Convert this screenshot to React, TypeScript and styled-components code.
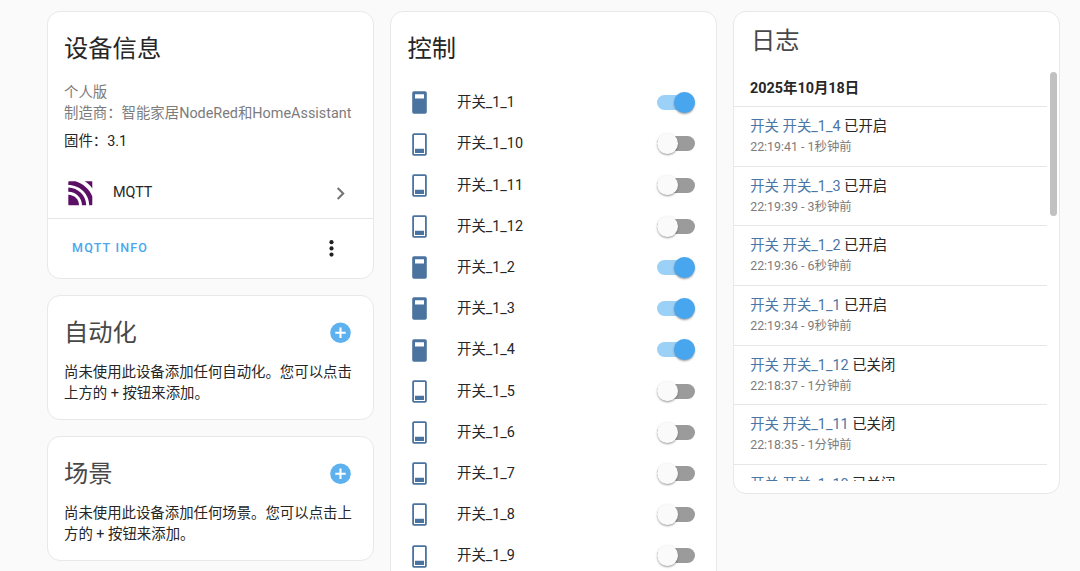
import React from "react";
import styled, { createGlobalStyle } from "styled-components";

const GlobalStyle = createGlobalStyle`
  *, *::before, *::after { box-sizing: border-box; }
  html, body { margin: 0; background: #fafafa; }
  body {
    height: 571px;
    overflow: hidden;
    font-family: Roboto, "Noto Sans CJK SC", sans-serif;
    font-size: 14.4px;
    line-height: 20.6px;
    color: #262626;
  }
`;

const Page = styled.main`
  display: grid;
  grid-template-columns: repeat(3, 327px);
  column-gap: 16px;
  align-items: start;
  height: 571px;
  padding: 11px 0 0 47px;
  overflow: hidden;
`;

const Column = styled.div`
  display: flex;
  flex-direction: column;
  gap: 16px;
`;

const Card = styled.section<{ $height: number }>`
  display: flex;
  flex-direction: column;
  height: ${(p) => p.$height}px;
  border: 1px solid #e8e8e8;
  border-radius: 13px;
  background: #fff;
  overflow: hidden;
`;

const Title = styled.h1<{ $soft?: boolean }>`
  margin: 0;
  font-size: 24.3px;
  line-height: 36px;
  font-weight: 400;
  color: ${(p) => (p.$soft ? "#484848" : "#262626")};
`;

const InfoBody = styled.div`
  padding: 19px 16px 0;
  height: 155px;
`;

const Meta = styled.p<{ $muted?: boolean }>`
  margin: 0;
  height: 21px;
  line-height: 21px;
  white-space: nowrap;
  color: ${(p) => (p.$muted ? "#7c7c7c" : "#262626")};
`;

const MetaGroup = styled.div<{ $top: number }>`
  margin-top: ${(p) => p.$top}px;
`;

const IntegrationRow = styled.div`
  display: flex;
  align-items: center;
  height: 52px;
  padding: 1px 20px 0 20px;
  border-bottom: 1px solid #e6e6e6;
`;

const IntegrationName = styled.span`
  flex: 1;
  padding: 1px 0 0 20px;
`;

const Actions = styled.div`
  display: flex;
  align-items: center;
  justify-content: space-between;
  height: 58px;
  padding: 0 37px 0 24px;
`;

const TextButton = styled.button`
  padding: 0;
  border: 0;
  background: none;
  font: 500 12.5px/20px Roboto, sans-serif;
  letter-spacing: 1.2px;
  color: #4ba7ec;
`;

const EmptyHeader = styled.div`
  display: flex;
  align-items: center;
  justify-content: space-between;
  height: 36px;
  margin: 19px 22.5px 0 16px;
`;

const EmptyText = styled.p`
  margin: 11px 16px 0;
  height: 42px;
  line-height: 21px;
  width: 294px;
`;

const ControlTitle = styled.div`
  padding: 19px 16px 0 16.4px;
  height: 70.4px;
`;

const SwitchRow = styled.div`
  display: flex;
  align-items: center;
  height: 41.2px;
  flex: none;
  padding: 0 21.3px 0 21px;
`;

const SwitchName = styled.span`
  flex: 1;
  padding: 1px 0 0 30px;
`;

const Toggle = styled.span<{ $on: boolean }>`
  display: flex;
  align-items: center;
  justify-content: ${(p) => (p.$on ? "flex-end" : "flex-start")};
  width: 37.5px;
  height: 15px;
  margin-bottom: 0.6px;
  border-radius: 8px;
  background: ${(p) => (p.$on ? "#9bd0f7" : "#9b9b9b")};
`;

const Thumb = styled.span<{ $on: boolean }>`
  flex: none;
  width: 20.8px;
  height: 20.8px;
  border-radius: 50%;
  background: ${(p) => (p.$on ? "#48a6ee" : "#fafafa")};
  box-shadow: 0 2px 2px -1px rgba(0, 0, 0, 0.2), 0 1px 2px rgba(0, 0, 0, 0.14), 0 1px 3px rgba(0, 0, 0, 0.12);
`;

const LogTitle = styled.div`
  padding: 11px 17px 0;
  height: 59px;
`;

const LogViewport = styled.div`
  display: flex;
  height: 410px;
  overflow: hidden;
`;

const LogList = styled.div`
  width: 313px;
  flex: none;
`;

const LogDate = styled.div`
  height: 35.2px;
  padding: 8px 16px 0;
  font-weight: 700;
  line-height: 20px;
`;

const LogEntry = styled.div`
  height: 59.6px;
  padding: 9px 16px 0 16.2px;
  border-top: 1px solid #e6e6e6;
`;

const LogMessage = styled.div`
  line-height: 21px;
  white-space: nowrap;
`;

const LogLink = styled.span`
  color: #4a76a6;
`;

const LogTime = styled.div`
  font-size: 12.4px;
  line-height: 20.4px;
  color: #7c7c7c;
`;

const ScrollThumb = styled.div`
  width: 7px;
  height: 144px;
  margin: 1px 0 0 3px;
  border-radius: 4px;
  background: #c1c1c1;
`;

const MqttLogo = () => (
  <svg width="25" height="25" viewBox="0 0 25 25" fill="#5b1065">
    <path d="M0.3 13.8C6.3 14 10.9 18.4 11 24.2H1.2Q0.3 24.2 0.3 23.3V13.8Z" />
    <path d="M0.3 6.6C10.2 6.8 18.1 14.6 18.2 24.2H14C14 16.8 7.9 10.8 0.3 10.7Z" />
    <path d="M0.3 1.2Q0.3 0.3 1.2 0.3H7.4C14.7 2.3 21.6 8.3 24.3 15.4V23.3Q24.3 24.2 23.4 24.2H21.2C21.2 13 12 4 0.3 3.9Z" />
    <path d="M16.7 0.3H23.4Q24.3 0.3 24.3 1.2V7.5C22.4 4.6 19.8 2.1 16.7 0.3Z" />
  </svg>
);

const Chevron = () => (
  <svg width="25" height="25" viewBox="0 0 24 24" fill="#757575">
    <path d="M8.59 16.58 13.17 12 8.59 7.41 10 6l6 6-6 6-1.41-1.42Z" />
  </svg>
);

const Dots = () => (
  <svg width="9" height="25" viewBox="0 0 9 25" fill="#212121">
    <circle cx="4.5" cy="6.2" r="2.1" />
    <circle cx="4.5" cy="12.4" r="2.1" />
    <circle cx="4.5" cy="18.6" r="2.1" />
  </svg>
);

const AddIcon = () => (
  <svg width="21" height="22" viewBox="0 0 21 22">
    <circle cx="10.5" cy="10.8" r="10.3" fill="#5eb1ef" />
    <path d="M10.5 5.6V16M5.3 10.8H15.7" stroke="#fff" strokeWidth="2.1" />
  </svg>
);

const SwitchIcon = ({ on }: { on: boolean }) => (
  <svg width="15" height="23" viewBox="0 0 15 23">
    {on ? (
      <path
        fill="#4a739f"
        fillRule="evenodd"
        d="M2 0.2H13Q14.8 0.2 14.8 2V21Q14.8 22.8 13 22.8H2Q0.2 22.8 0.2 21V2Q0.2 0.2 2 0.2ZM3 3.2V7.4H12V3.2Z"
      />
    ) : (
      <path
        fill="#4a739f"
        fillRule="evenodd"
        d="M2 0.2H13Q14.8 0.2 14.8 2V21Q14.8 22.8 13 22.8H2Q0.2 22.8 0.2 21V2Q0.2 0.2 2 0.2ZM2 2V21H13V2ZM3 15.8H12V20H3Z"
      />
    )}
  </svg>
);

const switches: { id: string; on: boolean }[] = [
  { id: "1", on: true },
  { id: "10", on: false },
  { id: "11", on: false },
  { id: "12", on: false },
  { id: "2", on: true },
  { id: "3", on: true },
  { id: "4", on: true },
  { id: "5", on: false },
  { id: "6", on: false },
  { id: "7", on: false },
  { id: "8", on: false },
  { id: "9", on: false },
];

const logs = [
  { id: "4", state: "已开启", time: "22:19:41 - 1秒钟前" },
  { id: "3", state: "已开启", time: "22:19:39 - 3秒钟前" },
  { id: "2", state: "已开启", time: "22:19:36 - 6秒钟前" },
  { id: "1", state: "已开启", time: "22:19:34 - 9秒钟前" },
  { id: "12", state: "已关闭", time: "22:18:37 - 1分钟前" },
  { id: "11", state: "已关闭", time: "22:18:35 - 1分钟前" },
  { id: "10", state: "已关闭", time: "" },
];

const EmptyCard = ({ title, text, height }: { title: string; text: string; height: number }) => (
  <Card $height={height}>
    <EmptyHeader>
      <Title $soft>{title}</Title>
      <AddIcon />
    </EmptyHeader>
    <EmptyText>{text}</EmptyText>
  </Card>
);

export default function App() {
  return (
    <>
      <GlobalStyle />
      <Page>
        <Column>
          <Card $height={268}>
            <InfoBody>
              <Title>设备信息</Title>
              <MetaGroup $top={15}>
                <Meta $muted>个人版</Meta>
                <Meta $muted>制造商：智能家居NodeRed和HomeAssistant</Meta>
              </MetaGroup>
              <MetaGroup $top={7}>
                <Meta>固件：3.1</Meta>
              </MetaGroup>
            </InfoBody>
            <IntegrationRow>
              <MqttLogo />
              <IntegrationName>MQTT</IntegrationName>
              <Chevron />
            </IntegrationRow>
            <Actions>
              <TextButton>MQTT INFO</TextButton>
              <Dots />
            </Actions>
          </Card>
          <EmptyCard title="自动化" text="尚未使用此设备添加任何自动化。您可以点击上方的 + 按钮来添加。" height={125} />
          <EmptyCard title="场景" text="尚未使用此设备添加任何场景。您可以点击上方的 + 按钮来添加。" height={125} />
        </Column>
        <Card $height={600}>
          <ControlTitle>
            <Title>控制</Title>
          </ControlTitle>
          {switches.map((s) => (
            <SwitchRow key={s.id}>
              <SwitchIcon on={s.on} />
              <SwitchName>开关_1_{s.id}</SwitchName>
              <Toggle $on={s.on}>
                <Thumb $on={s.on} />
              </Toggle>
            </SwitchRow>
          ))}
        </Card>
        <Card $height={483}>
          <LogTitle>
            <Title $soft>日志</Title>
          </LogTitle>
          <LogViewport>
            <LogList>
              <LogDate>2025年10月18日</LogDate>
              {logs.map((l) => (
                <LogEntry key={l.id}>
                  <LogMessage>
                    <LogLink>开关 开关_1_{l.id}</LogLink> {l.state}
                  </LogMessage>
                  <LogTime>{l.time}</LogTime>
                </LogEntry>
              ))}
            </LogList>
            <ScrollThumb />
          </LogViewport>
        </Card>
      </Page>
    </>
  );
}
